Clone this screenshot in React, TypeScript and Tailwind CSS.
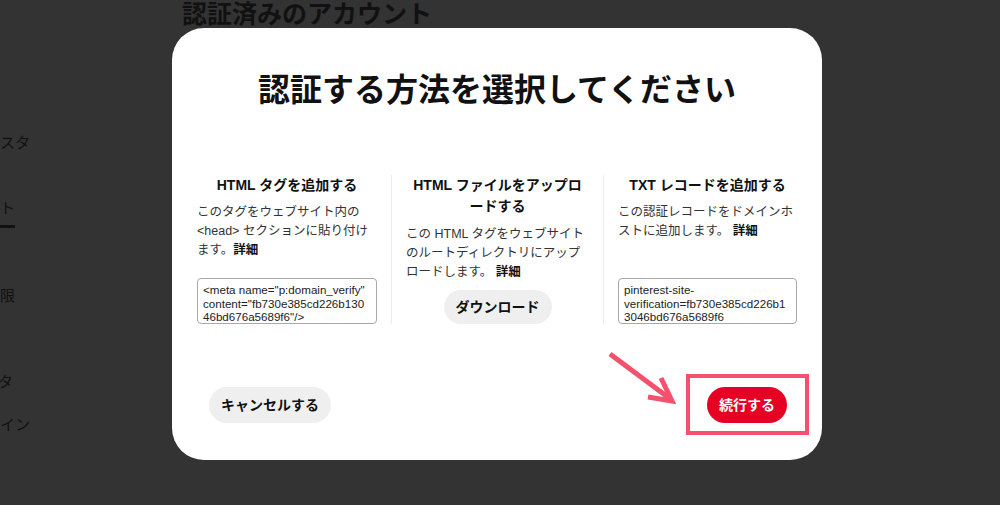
import React from "react";

const font = { fontFamily: '"Liberation Sans", "Noto Sans CJK JP", sans-serif' };

function SideItem({ text, className = "" }: { text: string; className?: string }) {
  return (
    <div className={"flex justify-end whitespace-nowrap h-[20px] leading-[20px] text-[15px] text-[#111] " + className}>
      <span className="shrink-0">{text}</span>
    </div>
  );
}

export default function App() {
  return (
    <div className="relative w-[1000px] h-[505px] overflow-hidden bg-[#333333]" style={font}>
      {/* background page (under overlay) */}
      <div className="flex h-full">
        <div className="w-[30px] overflow-hidden flex flex-col pt-[133px]">
          <SideItem text="ホームフィードのカスタ" />
          <SideItem text="認証済みのアカウント" className="mt-[45px] w-[15px] self-start" />
          <div className="mt-[7px] h-[3px] w-[15px] bg-[#111]" />
          <SideItem text="ソーシャルの権限" className="mt-[58px] w-[15px] self-start" />
          <SideItem text="プライバシーとデータ" className="mt-[66px] w-[13px] self-start" />
          <SideItem text="ドメインのログイン" className="mt-[23px]" />
        </div>
        <div className="pl-[152px]">
          <h1 className="text-[25px] leading-[28px] font-bold text-[#111]">認証済みのアカウント</h1>
        </div>
      </div>

      {/* modal */}
      <div className="absolute inset-0">
        <div className="ml-[172px] mt-[28px] w-[650px] h-[432px] bg-white rounded-[32px] pt-[42px] flex flex-col">
          <h2 className="text-center text-[32px] leading-[40px] font-bold text-[#111]">
            認証する方法を選択してください
          </h2>

          <div className="mt-[65px] px-[11px] grid grid-cols-[208px_212px_208px]">
            {/* col 1 */}
            <div className="px-[14px] flex flex-col">
              <div className="text-center text-[14px] leading-[21px] font-bold text-[#111]">HTML タグを追加する</div>
              <div className="mt-[7px] text-[12.5px] leading-[19px] text-[#333]">
                このタグをウェブサイト内の
                <br />
                &lt;head&gt; セクションに貼り付け
                <br />
                ます。<span className="font-bold text-[#111]">詳細</span>
              </div>
              <div className="mt-auto h-[46px] border border-[#a8a8a8] rounded-[4px] px-[5px] pt-[4px] text-[11.6px] leading-[13.5px] text-[#222] whitespace-nowrap">
                &lt;meta name="p:domain_verify"
                <br />
                content="fb730e385cd226b130
                <br />
                46bd676a5689f6"/&gt;
              </div>
            </div>

            {/* col 2 */}
            <div className="px-[14px] border-l border-[#ececec] flex flex-col">
              <div className="text-center text-[14px] leading-[21px] font-bold text-[#111]">
                HTML ファイルをアップロ
                <br />
                ードする
              </div>
              <div className="mt-[8px] text-[12.5px] leading-[19px] text-[#333]">
                この HTML タグをウェブサイト
                <br />
                のルートディレクトリにアップ
                <br />
                ロードします。 <span className="font-bold text-[#111]">詳細</span>
              </div>
              <div className="mt-[8px] flex justify-center">
                <button className="h-[34px] px-[12px] rounded-full bg-[#efefef] text-[14px] font-bold text-[#111]">
                  ダウンロード
                </button>
              </div>
            </div>

            {/* col 3 */}
            <div className="px-[14px] border-l border-[#ececec] flex flex-col">
              <div className="text-center text-[14px] leading-[21px] font-bold text-[#111]">TXT レコードを追加する</div>
              <div className="mt-[7px] text-[12.5px] leading-[19px] text-[#333]">
                この認証レコードをドメインホ
                <br />
                ストに追加します。 <span className="font-bold text-[#111]">詳細</span>
              </div>
              <div className="mt-auto h-[46px] border border-[#a8a8a8] rounded-[4px] px-[5px] pt-[4px] text-[11.6px] leading-[13.5px] text-[#222] whitespace-nowrap">
                pinterest-site-
                <br />
                verification=fb730e385cd226b1
                <br />
                3046bd676a5689f6
              </div>
            </div>
          </div>

          <div className="mt-[63px] pl-[37px] pr-[35px] flex justify-between items-center">
            <button className="h-[36px] px-[12px] rounded-full bg-[#efefef] text-[14px] font-bold text-[#111]">
              キャンセルする
            </button>
            <button className="h-[36px] px-[12px] rounded-full bg-[#e60023] text-[14px] font-bold text-white">
              続行する
            </button>
          </div>
        </div>
      </div>

      {/* annotation */}
      <div className="absolute left-[686px] top-[374px] w-[123px] h-[61px] border-4 border-[#f5506e]" />
      <svg className="absolute left-0 top-0" width="1000" height="505" viewBox="0 0 1000 505" fill="none">
        <line x1="610" y1="354" x2="669" y2="398" stroke="#f5506e" strokeWidth="5" />
        <polyline points="661,378 672,401 648,397" stroke="#f5506e" strokeWidth="5" strokeLinejoin="miter" />
      </svg>
    </div>
  );
}
